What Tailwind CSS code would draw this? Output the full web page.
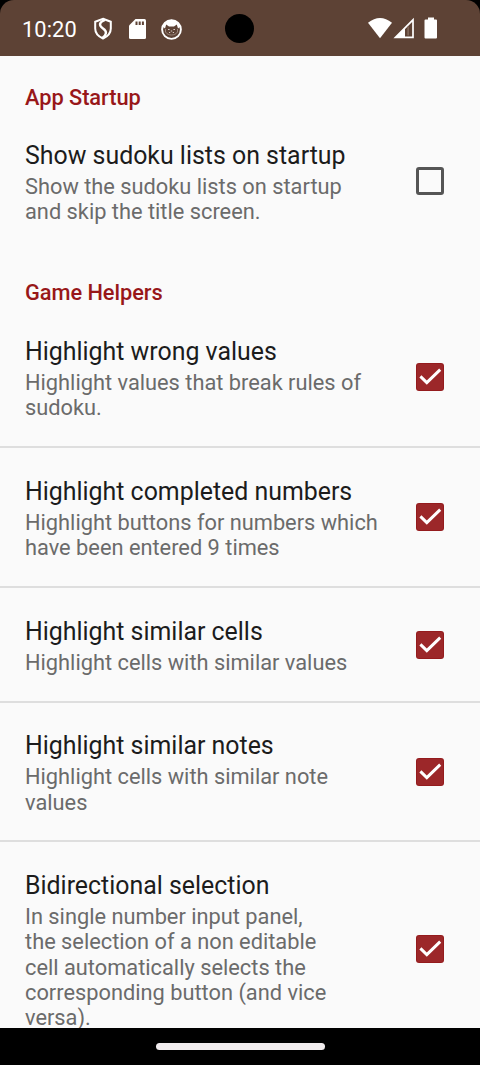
<!DOCTYPE html>
<html lang="en">
<head>
<meta charset="utf-8">
<title>Settings</title>
<script src="https://cdn.jsdelivr.net/npm/@tailwindcss/browser@4"></script>
</head>
<body class="bg-black">
<svg class="hidden">
  <symbol id="checked" viewBox="0 0 28 28">
    <rect width="28" height="28" rx="3" fill="#941b1d"/>
    <rect x="1" y="1" width="26" height="26" rx="2" fill="#9c2729"/>
    <path d="M4.400 13.400 10.800 19.600 24.200 6.600" fill="none" stroke="#fff" stroke-width="3"/>
  </symbol>
</svg>
<div class="flex h-[1065px] w-[480px] flex-col overflow-hidden bg-black font-['Roboto',sans-serif]">
  <header class="relative flex h-14 shrink-0 items-center rounded-t-[14px] bg-[#5d4235] pl-[22px] pr-[42px] pt-[2px] text-white">
    <span class="w-[71px] pt-px text-[21.800px] leading-none tracking-[0.100px]">10:20</span>
    <svg class="h-[24px] w-[20px]" viewBox="0 0 20 24">
      <path d="M10 1.800 17.800 4.800v6.700c0 4.600-3.200 8-7.800 10-4.600-2-7.800-5.400-7.800-10V4.800z" fill="none" stroke="#fff" stroke-width="2"/>
      <path d="M12 2.800C6 5 5.500 8.500 10 11.500S13.500 17.500 9.500 21" fill="none" stroke="#fff" stroke-width="2.400"/>
    </svg>
    <svg class="ml-4 h-[20px] w-[17px]" viewBox="0 0 17 20">
      <path d="M6.500 0H15.500a1.500 1.500 0 0 1 1.500 1.500v17a1.500 1.500 0 0 1-1.500 1.500H1.500a1.500 1.500 0 0 1-1.500-1.500V6.500z" fill="#fff"/>
      <path d="M6.500 2.500h2v3.500h-2zM9.700 2.500h2v3.500h-2zM12.900 2.500h2v3.500h-2z" fill="#5d4235"/>
    </svg>
    <svg class="ml-[15px] h-[21px] w-[21px]" viewBox="0 0 21 21">
      <circle cx="10.500" cy="10.500" r="9.400" fill="none" stroke="#fff" stroke-width="1.900"/>
      <path d="M1.500 7.500Q10.500-6 19.500 7.500L17 9.500 15.800 5.500 13 7.500H8L5.200 5.500 4 9.500z" fill="#fff"/>
      <path d="M4.500 10v3c2.500 4 9.500 4 12 0V10" fill="none" stroke="#a8958b" stroke-width=".8"/>
      <path d="M7 10.500h1.600M12.400 10.500H14M8 13.500h1.200M11.800 13.500H13M9.800 12h1.400" stroke="#d5c9c3" stroke-width="1"/>
    </svg>
    <div class="absolute left-[225px] top-[14px] size-[29px] rounded-full bg-black"></div>
    <svg class="ml-auto h-[24px] w-[70px]" viewBox="0 0 70 24">
      <path d="M0 5.800Q12-3.600 24 5.800L12 21.200z" fill="#fff"/>
      <path d="M27.500 20.400 45 2.800V20.400z" fill="none" stroke="#fff" stroke-width="1.700"/>
      <path d="M27 20.800 37 10.500V20.800z" fill="#fff"/>
      <path d="M39.500 9.500h1.200V18.500H39.500z" fill="#8d7468"/>
      <path d="M60 0.500h6V2.500H68a1 1 0 0 1 1 1V20.500a1 1 0 0 1-1 1H57.500a1 1 0 0 1-1-1V3.500a1 1 0 0 1 1-1H60z" fill="#fff"/>
    </svg>
  </header>

  <main class="h-[972px] shrink-0 overflow-hidden whitespace-nowrap bg-[#fafafa] text-[21.800px] leading-[25.400px] text-[#6b6b6b]">
    <h2 class="h-[55px] pl-[25px] pt-[28.500px] font-medium tracking-[-0.050px] text-[#981719]">App Startup</h2>
    <section class="flex h-[140px] items-center justify-between pl-[25px] pr-9">
      <div class="pt-1">
        <h3 class="text-[24.900px] leading-[29.200px] text-[#1c1c1c]">Show sudoku lists on startup</h3>
        <p class="pt-[3.500px]">Show the sudoku lists on startup<br>and skip the title screen.</p>
      </div>
      <div class="size-7 rounded-[3px] border-[3px] border-[#555]"></div>
    </section>

    <h2 class="h-[56px] pl-[25px] pt-[29px] font-medium tracking-[-0.050px] text-[#981719]">Game Helpers</h2>
    <section class="flex h-[140px] items-center justify-between pl-[25px] pr-9">
      <div class="pt-[3.500px]">
        <h3 class="text-[24.900px] leading-[29.200px] text-[#1c1c1c]">Highlight wrong values</h3>
        <p class="pt-[3.800px]">Highlight values that break rules of<br>sudoku.</p>
      </div>
      <svg class="size-7"><use href="#checked"/></svg>
    </section>
    <section class="flex h-[140px] items-center justify-between pl-[25px] pr-9 shadow-[0_-1px_0_#dedede,inset_0_1px_0_#dedede]">
      <div class="pt-[3.500px]">
        <h3 class="text-[24.900px] leading-[29.200px] text-[#1c1c1c]">Highlight completed numbers</h3>
        <p class="pt-[3.500px]">Highlight buttons for numbers which<br>have been entered 9 times</p>
      </div>
      <svg class="size-7"><use href="#checked"/></svg>
    </section>
    <section class="flex h-[115px] items-center justify-between pl-[25px] pr-9 shadow-[0_-1px_0_#dedede,inset_0_1px_0_#dedede]">
      <div class="pt-[3.500px]">
        <h3 class="text-[24.900px] leading-[29.200px] text-[#1c1c1c]">Highlight similar cells</h3>
        <p class="pt-[3.500px]">Highlight cells with similar values</p>
      </div>
      <svg class="size-7"><use href="#checked"/></svg>
    </section>
    <section class="flex h-[139px] items-center justify-between pl-[25px] pr-9 shadow-[0_-1px_0_#dedede,inset_0_1px_0_#dedede]">
      <div class="pt-[3.500px]">
        <h3 class="text-[24.900px] leading-[29.200px] text-[#1c1c1c]">Highlight similar notes</h3>
        <p class="pt-[3.800px]">Highlight cells with similar note<br>values</p>
      </div>
      <svg class="size-7"><use href="#checked"/></svg>
    </section>
    <section class="flex h-[216px] items-center justify-between pl-[25px] pr-9 shadow-[0_-1px_0_#dedede,inset_0_1px_0_#dedede]">
      <div class="pt-[3.500px]">
        <h3 class="text-[24.900px] leading-[29.200px] text-[#1c1c1c]">Bidirectional selection</h3>
        <p class="pt-[3.800px]">In single number input panel,<br>the selection of a non editable<br>cell automatically selects the<br>corresponding button (and vice<br>versa).</p>
      </div>
      <svg class="size-7"><use href="#checked"/></svg>
    </section>
  </main>

  <footer class="flex h-[37px] shrink-0 items-center justify-center">
    <div class="h-[7px] w-[169px] rounded-full bg-[#f1ecee]"></div>
  </footer>
</div>
</body>
</html>
